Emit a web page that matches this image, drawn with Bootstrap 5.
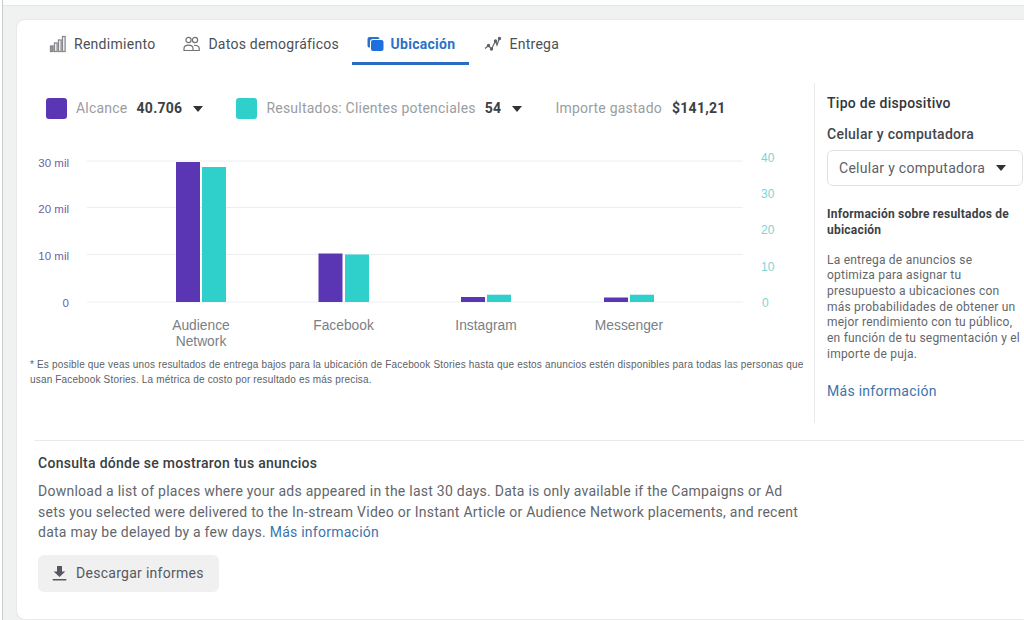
<!doctype html>
<html lang="es">
<head>
<meta charset="utf-8">
<title>Ubicación</title>
<link href="https://cdn.jsdelivr.net/npm/bootstrap@5.3.0/dist/css/bootstrap.min.css" rel="stylesheet">
<style>
html,body{height:620px;overflow:hidden}
body{background:#f0f2f2;font-family:Roboto,"Liberation Sans",sans-serif;font-size:14px;letter-spacing:.28px;color:#444950;position:relative}
.top-strip{height:6px;background:#fdfdfd;border-bottom:1px solid #e4e7e7}
.edge-line{position:absolute;left:0;top:0;bottom:0;width:3px;background:#fff;border-right:1px solid #c9cccc}
.report{margin:14px 0 0 17px;height:599px;border:0;border-radius:8px 0 0 8px;box-shadow:0 0 2px rgba(0,0,0,.12);overflow:hidden}
.tab-row{margin:6px 0 0 17px;flex-wrap:nowrap}
.tab-row .nav-link{display:flex;align-items:center;gap:7px;height:39px;padding:8px 13px 8px 15px;color:#4b4f56;border-bottom:3px solid transparent;line-height:20px}
.tab-row .nav-link.active{color:#2c72c7;font-weight:700;padding-right:14px;border-bottom-color:#2a6cc4}
.tab-row .tab-datos{gap:8px;padding-right:12.500px;letter-spacing:.24px}
.tab-row svg{flex:none}
.main-row{margin:18px 0 0 13px;height:340px}
.left-col{width:784px;flex:none}
.legend-row{padding:15px 0 0 16px;height:36px;margin-bottom:21px}
.swatch{width:21px;height:21px;border-radius:3px;flex:none}
.swatch-a{background:#5a36b5}
.swatch-b{background:#2fcfcb;margin-left:33px}
.lg-label{color:#9a9da1;margin-left:9px;white-space:nowrap;letter-spacing:.22px}
.lg-spent{margin-left:33px}
.lg-value{color:#3c3f44;font-weight:700;margin-left:9px}
.lg-spent + .lg-value{margin-left:10px}
.caret-d{width:0;height:0;border-left:5.5px solid transparent;border-right:5.5px solid transparent;border-top:6px solid #2f3236;flex:none}
.legend-row .caret-d{margin-left:11px}
.chart-box{display:block}
.axis-a{font:11.5px "Liberation Sans",sans-serif;letter-spacing:0;fill:#6f5fa6}
.axis-b{font:12px "Liberation Sans",sans-serif;letter-spacing:0;fill:#7fd3d5}
.axis-x{font:13.8px "Liberation Sans",sans-serif;letter-spacing:0;fill:#7b7f86}
.foot-note{font:10px/15px "Liberation Sans",sans-serif;color:#5c6167;margin:5px 0 0;white-space:nowrap;letter-spacing:.175px}
.side-col{border-left:1px solid #e9ebeb;padding:10px 0 0 12px;flex:1;min-width:0}
.side-title{font-weight:500;color:#33363b;line-height:20px}
.side-sub{font-weight:500;color:#44474c;line-height:20px;margin-top:11px}
.pick-box{display:flex;align-items:center;justify-content:space-between;width:196px;height:36px;margin-top:6px;padding:0 16px 0 11px;background:#fff;border:1px solid #dfe1e3;border-radius:6px;color:#5d6167;white-space:nowrap}
.info-title{font-size:12px;line-height:16px;font-weight:700;letter-spacing:.22px;color:#3c3f44;margin:20px 0 0;width:192px}
.info-text{font-size:12px;line-height:15.7px;letter-spacing:.22px;color:#63676d;margin:14.5px 0 0;white-space:nowrap}
.more-link{color:#3b74ab;text-decoration:none}
.side-more{display:block;line-height:20px;margin-top:18.5px}
.rule-box{margin:17px 0 0 17px;height:1px;background:#e9ebeb;flex:none}
.where-box{padding:12px 0 0 21px}
.where-title{font-weight:500;color:#3a3d42;line-height:20px}
.where-text{line-height:20.5px;letter-spacing:.25px;color:#62666c;margin:8px 0 0;white-space:nowrap}
.dl-btn{display:inline-flex;align-items:center;gap:9px;width:181px;height:37px;margin-top:12px;padding:0 14px;background:#f0f0f0;border:0;border-radius:6px;color:#55595f;font-size:14px;letter-spacing:.28px;white-space:nowrap}
</style>
</head>
<body>
<div class="top-strip"></div>
<div class="edge-line"></div>
<div class="card report">
  <ul class="nav tab-row">
    <li class="nav-item"><a class="nav-link" href="#">
      <svg width="18" height="18" viewBox="0 0 18 18" fill="none" stroke="#85878b" stroke-width="1.3"><rect x="1.5" y="11" width="2.6" height="5.5" fill="#999"/><rect x="5.5" y="8" width="2.6" height="8.5"/><rect x="9.5" y="5" width="2.6" height="11.5"/><rect x="13.5" y="1.5" width="2.6" height="15"/></svg>Rendimiento</a></li>
    <li class="nav-item"><a class="nav-link tab-datos" href="#">
      <svg width="17" height="16" viewBox="0 0 17 16" fill="none" stroke="#6e7176" stroke-width="1.2"><circle cx="5.5" cy="4" r="2.6"/><circle cx="12" cy="4" r="2.6"/><path d="M1 14.5v-2c0-2 1.8-3.300 4.500-3.300s4.500 1.300 4.500 3.300v2z"/><path d="M11 9.300c3 -.3 5.200 1 5.200 3v2.200h-6"/></svg>Datos demográficos</a></li>
    <li class="nav-item"><a class="nav-link active" href="#">
      <svg width="17" height="16" viewBox="0 0 17 16"><path d="M2.500 1h8a2 2 0 0 1 2 2H6a3 3 0 0 0-3 3v5.500A2 2 0 0 1 .5 9.500V3a2 2 0 0 1 2-2z" fill="#2a72c4"/><rect x="4" y="4" width="12.500" height="11" rx="2" fill="#1f6fe0"/></svg>Ubicación</a></li>
    <li class="nav-item"><a class="nav-link" href="#">
      <svg width="18" height="16" viewBox="0 0 18 16" fill="none" stroke="#5f6267" stroke-width="1.2"><path d="M1 12.500l3.500-3 3 3.500 4-8 1.500 4 2.500-7"/><circle cx="4.500" cy="9.500" r="1.100" fill="#5f6267"/><circle cx="7.500" cy="13" r="1.100" fill="#5f6267"/><circle cx="11.500" cy="5" r="1.100" fill="#5f6267"/><circle cx="15.500" cy="2.500" r="1.100" fill="#5f6267"/></svg>Entrega</a></li>
  </ul>

  <div class="d-flex main-row">
    <div class="left-col">
      <div class="d-flex align-items-center legend-row">
        <span class="swatch swatch-a"></span><span class="lg-label">Alcance</span><span class="lg-value">40.706</span><span class="caret-d"></span>
        <span class="swatch swatch-b"></span><span class="lg-label">Resultados: Clientes potenciales</span><span class="lg-value">54</span><span class="caret-d"></span>
        <span class="lg-label lg-spent">Importe gastado</span><span class="lg-value">$141,21</span>
      </div>
      <svg class="chart-box" width="784" height="212" viewBox="30 140 784 212" role="img" aria-label="Gráfico de ubicación">
        <g stroke="#eceeef" stroke-width="1">
          <line x1="87" x2="743" y1="161" y2="161"/><line x1="87" x2="743" y1="207.500" y2="207.500"/><line x1="87" x2="743" y1="254.500" y2="254.500"/><line x1="87" x2="743" y1="302" y2="302"/>
        </g>
        <g fill="#5a36b5">
          <rect x="176" y="162" width="24" height="140"/><rect x="318.500" y="253.500" width="24" height="48.500"/><rect x="461" y="297" width="24" height="5"/><rect x="604" y="297.500" width="24" height="4.500"/>
        </g>
        <g fill="#2fcfcb">
          <rect x="202" y="167" width="24" height="135"/><rect x="345" y="254.500" width="24" height="47.500"/><rect x="487" y="294.700" width="24" height="7.300"/><rect x="630" y="294.700" width="24" height="7.300"/>
        </g>
        <g class="axis-a" text-anchor="end"><text x="69" y="166.500">30 mil</text><text x="69" y="213">20 mil</text><text x="69" y="259.500">10 mil</text><text x="69" y="307">0</text></g>
        <g class="axis-b"><text x="761" y="161.500">40</text><text x="761" y="198">30</text><text x="761" y="234">20</text><text x="761" y="271">10</text><text x="762" y="306.500">0</text></g>
        <g class="axis-x" text-anchor="middle"><text x="201" y="330">Audience</text><text x="201" y="346">Network</text><text x="343.500" y="330">Facebook</text><text x="486" y="330">Instagram</text><text x="629" y="330">Messenger</text></g>
      </svg>
      <p class="foot-note">* Es posible que veas unos resultados de entrega bajos para la ubicación de Facebook Stories hasta que estos anuncios estén disponibles para todas las personas que<br>usan Facebook Stories. La métrica de costo por resultado es más precisa.</p>
    </div>
    <div class="side-col">
      <div class="side-title">Tipo de dispositivo</div>
      <div class="side-sub">Celular y computadora</div>
      <div class="pick-box"><span>Celular y computadora</span><span class="caret-d"></span></div>
      <p class="info-title">Información sobre resultados de ubicación</p>
      <p class="info-text">La entrega de anuncios se<br>optimiza para asignar tu<br>presupuesto a ubicaciones con<br>más probabilidades de obtener un<br>mejor rendimiento con tu público,<br>en función de tu segmentación y el<br>importe de puja.</p>
      <a class="more-link side-more" href="#">Más información</a>
    </div>
  </div>

  <div class="rule-box"></div>
  <div class="where-box">
    <div class="where-title">Consulta dónde se mostraron tus anuncios</div>
    <p class="where-text">Download a list of places where your ads appeared in the last 30 days. Data is only available if the Campaigns or Ad<br>sets you selected were delivered to the In-stream Video or Instant Article or Audience Network placements, and recent<br>data may be delayed by a few days. <a class="more-link" href="#">Más información</a></p>
    <button type="button" class="btn dl-btn"><svg width="15" height="16" viewBox="0 0 15 16" fill="#55595f"><path d="M5 1h5v5.500h3.300L7.500 12 1.700 6.500H5z"/><rect x="0.500" y="14" width="14" height="1.600" rx=".8"/></svg>Descargar informes</button>
  </div>
</div>
</body>
</html>
